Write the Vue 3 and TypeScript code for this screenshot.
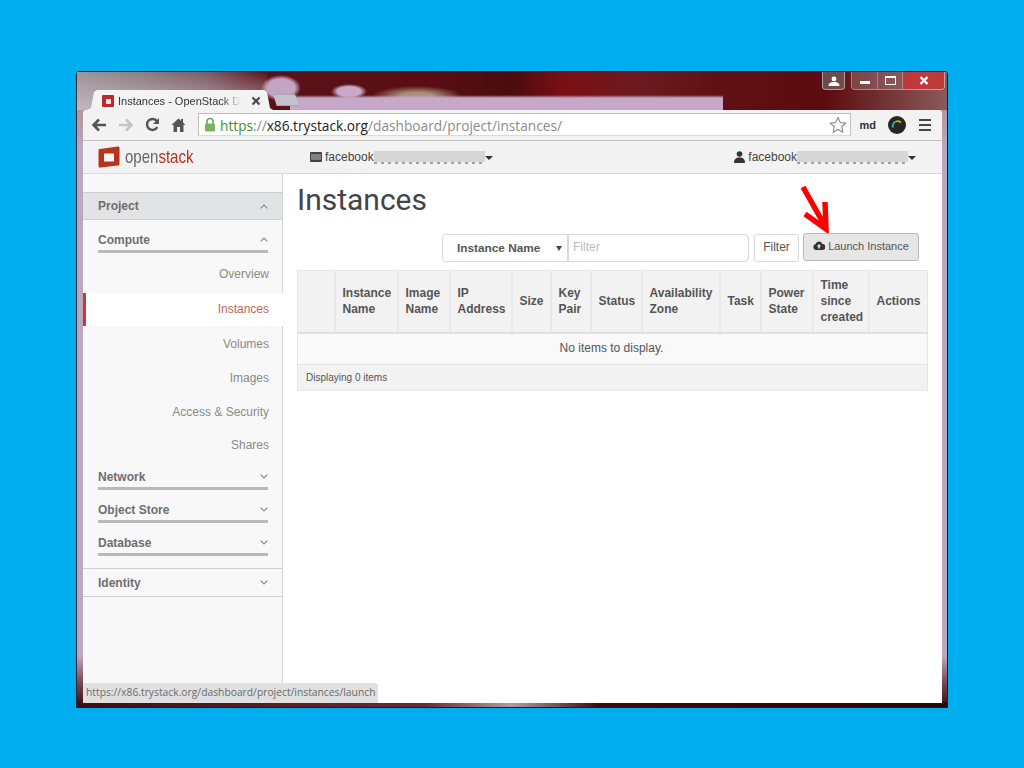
<script setup lang="ts">
const computeItems = [
  { label: 'Overview', active: false },
  { label: 'Instances', active: true },
  { label: 'Volumes', active: false },
  { label: 'Images', active: false },
  { label: 'Access & Security', active: false },
  { label: 'Shares', active: false },
]

const groups = ['Network', 'Object Store', 'Database']

const columns = [
  { lines: [], width: 37 },
  { lines: ['Instance', 'Name'], width: 63 },
  { lines: ['Image', 'Name'], width: 52 },
  { lines: ['IP', 'Address'], width: 62 },
  { lines: ['Size'], width: 39 },
  { lines: ['Key', 'Pair'], width: 40 },
  { lines: ['Status'], width: 51 },
  { lines: ['Availability', 'Zone'], width: 78 },
  { lines: ['Task'], width: 41 },
  { lines: ['Power', 'State'], width: 52 },
  { lines: ['Time', 'since', 'created'], width: 56 },
  { lines: ['Actions'], width: 59 },
]
</script>

<template>
  <div class="desktop">
    <div class="window">
      <div class="titlebar">
        <div class="tab">
          <span class="favicon"><i /></span>
          <span class="tab-title">Instances - OpenStack Da</span>
          <svg class="tab-close" width="10" height="10" viewBox="0 0 10 10">
            <path d="M1.5 1.5l7 7M8.5 1.5l-7 7" stroke="#444" stroke-width="2" />
          </svg>
        </div>
        <div class="new-tab" />
        <div class="controls">
          <div class="ctl ctl-user">
            <svg width="12" height="10" viewBox="0 0 12 10">
              <circle cx="6" cy="3" r="2.4" fill="#fff" />
              <path d="M0.5 10c0-3 2-4 5.500-4s5.500 1 5.500 4z" fill="#fff" />
            </svg>
          </div>
          <div class="ctl-group">
            <div class="ctl ctl-min"><i /></div>
            <div class="ctl ctl-max"><i /></div>
            <div class="ctl ctl-close">
              <svg width="10" height="9" viewBox="0 0 10 9">
                <path d="M1.500 1l7 7M8.500 1l-7 7" stroke="#fff" stroke-width="2.400" />
              </svg>
            </div>
          </div>
        </div>
      </div>

      <div class="toolbar">
        <svg class="nav" width="16" height="14" viewBox="0 0 16 14">
          <path d="M15 7H4M8 1.500L2.500 7 8 12.500" fill="none" stroke="#555" stroke-width="2.600" />
        </svg>
        <svg class="nav" width="16" height="14" viewBox="0 0 16 14">
          <path d="M1 7h11M8 1.500L13.500 7 8 12.500" fill="none" stroke="#c4c4c4" stroke-width="2.600" />
        </svg>
        <svg class="nav" width="15" height="15" viewBox="0 0 15 15">
          <path d="M12.300 10.200A5.500 5.500 0 1 1 12 4.200" fill="none" stroke="#555" stroke-width="2.400" />
          <path d="M14 1v6H8z" fill="#555" />
        </svg>
        <svg class="nav nav-home" width="15" height="14" viewBox="0 0 15 14">
          <path d="M7.500 0.500L0.500 7h2v7h3.500V9h3v5h3.500V7h2L12 4.600V1h-2v1.700z" fill="#555" />
        </svg>
        <div class="omnibox">
          <svg class="lock" width="12" height="15" viewBox="0 0 12 15">
            <path d="M3 7V4.500a3 3 0 0 1 6 0V7" fill="none" stroke="#6aa84f" stroke-width="1.600" />
            <rect x="1" y="6.500" width="10" height="8" rx="1" fill="#7ab55c" />
          </svg>
          <span class="url"><b>https</b><em>://</em><strong>x86.trystack.org</strong><em>/dashboard/project/instances/</em></span>
          <svg class="star" width="18" height="18" viewBox="0 0 18 18">
            <path d="M9 1.500l2.300 5 5.400.6-4 3.700 1.100 5.400L9 13.500l-4.800 2.700 1.100-5.400-4-3.700 5.400-.6z" fill="#fff" stroke="#8a8a8a" stroke-width="1.100" />
          </svg>
        </div>
        <span class="md">md</span>
        <svg class="ext" width="18" height="18" viewBox="0 0 18 18">
          <circle cx="9" cy="9" r="9" fill="#27261f" />
          <path d="M5 11.500a4.500 4.500 0 0 1 3-6" fill="none" stroke="#2bb3c0" stroke-width="1.800" />
          <path d="M8 5.500a4.500 4.500 0 0 1 5 1" fill="none" stroke="#e0b020" stroke-width="1.800" />
        </svg>
        <div class="hamburger"><i /><i /><i /></div>
      </div>

      <header class="topbar">
        <div class="logo">
          <svg width="22" height="22" viewBox="0 0 22 22">
            <path d="M2 3l18-2.500c1 0 1.500.5 1.500 1.500v16c0 1-.5 1.500-1.500 1.500L2 21.500c-1 0-1.500-.5-1.500-1.500V4.500C.5 3.500 1 3 2 3z" fill="#b9321f" />
            <rect x="6" y="7.500" width="10" height="8" fill="#f5f5f5" />
          </svg>
          <span class="logo-text">open<span>stack</span></span>
        </div>
        <div class="project-pick">
          <svg width="12" height="10" viewBox="0 0 12 10">
            <rect width="12" height="10" rx="1" fill="#444" />
            <path d="M1 3h10M1 5h10M1 7h10" stroke="#ddd" stroke-width="0.800" />
          </svg>
          <span class="who">facebook</span><span class="redact" /><span class="caret" />
        </div>
        <div class="user-pick">
          <svg width="11" height="12" viewBox="0 0 11 12">
            <circle cx="5.500" cy="3" r="2.800" fill="#333" />
            <path d="M0 12c0-4 2-5.500 5.500-5.500S11 8 11 12z" fill="#333" />
          </svg>
          <span class="who">facebook</span><span class="redact" /><span class="caret" />
        </div>
      </header>

      <div class="page">
        <aside class="sidebar">
          <div class="side-head">
            <span>Project</span>
            <svg class="chev" width="8" height="5" viewBox="0 0 8 5"><path d="M.7 4.300L4 1l3.300 3.300" fill="none" stroke="#888" stroke-width="1.200" /></svg>
          </div>
          <div class="group">
            <span>Compute</span>
            <svg class="chev" width="8" height="5" viewBox="0 0 8 5"><path d="M.7 4.300L4 1l3.300 3.300" fill="none" stroke="#888" stroke-width="1.200" /></svg>
          </div>
          <ul class="side-list">
            <li v-for="item in computeItems" :key="item.label" :class="{ active: item.active }">{{ item.label }}</li>
          </ul>
          <div v-for="g in groups" :key="g" class="group">
            <span>{{ g }}</span>
            <svg class="chev" width="8" height="5" viewBox="0 0 8 5"><path d="M.7.700L4 4l3.300-3.300" fill="none" stroke="#888" stroke-width="1.200" /></svg>
          </div>
          <div class="identity">
            <span>Identity</span>
            <svg class="chev" width="8" height="5" viewBox="0 0 8 5"><path d="M.7.700L4 4l3.300-3.300" fill="none" stroke="#888" stroke-width="1.200" /></svg>
          </div>
        </aside>

        <main class="content">
          <h1>Instances</h1>
          <div class="actions">
            <div class="select">
              <span>Instance Name</span>
              <i class="select-caret" />
            </div>
            <div class="input">Filter</div>
            <button class="btn btn-filter">Filter</button>
            <button class="btn launch">
              <svg width="12" height="9" viewBox="0 0 12 9">
                <path d="M3 9a3 3 0 0 1-.4-5.900A3.500 3.500 0 0 1 9.300 3 3 3 0 0 1 9.500 9z" fill="#333" />
                <path d="M6 3L3.800 5.500h1.400V7.500h1.600V5.500h1.400z" fill="#e6e6e6" />
              </svg>
              Launch Instance
            </button>
            <svg class="arrow" width="32" height="48" viewBox="0 0 32 48">
              <path d="M4 2L26 41M26 17L27 44L6 29" fill="none" stroke="#f00" stroke-width="5.500" />
            </svg>
          </div>
          <table class="grid">
            <colgroup>
              <col v-for="(c, i) in columns" :key="i" :style="{ width: c.width + 'px' }" />
            </colgroup>
            <thead>
              <tr>
                <th v-for="(c, i) in columns" :key="i">
                  <div v-for="line in c.lines" :key="line">{{ line }}</div>
                </th>
              </tr>
            </thead>
            <tbody>
              <tr><td class="empty" colspan="12">No items to display.</td></tr>
            </tbody>
            <tfoot>
              <tr><td class="foot" colspan="12">Displaying 0 items</td></tr>
            </tfoot>
          </table>
        </main>
        <div class="status-bubble">https://x86.trystack.org/dashboard/project/instances/launch</div>
      </div>
    </div>
  </div>
</template>

<style>
html, body {
  margin: 0;
  background: #00aeef;
}
</style>

<style scoped>
.desktop {
  width: 1024px;
  height: 768px;
  box-sizing: border-box;
  padding: 71px 76px 60px;
  background: #00aeef;
  font-family: "Liberation Sans", Arial, sans-serif;
  overflow: hidden;
}

.window {
  height: 637px;
  box-sizing: border-box;
  border: 1px solid #14202e;
  border-radius: 3px 3px 0 0;
  padding: 0 5px 4px 6px;
  display: flex;
  flex-direction: column;
  background:
    linear-gradient(90deg, #3a1016 0, #6b2a34 40%, #b29aa0 50%, #3a0a10 60%, #2a0508 100%) 0 100% / 100% 5px no-repeat,
    linear-gradient(180deg, #a88484 0, #bba7c0 12%, #bba7c0 92%, #7a4a5a 96%, #3a0a10 100%);
}

.titlebar {
  flex: 0 0 38px;
  margin: 0 -5px 0 -6px;
  padding: 0 2px 0 6px;
  display: flex;
  align-items: flex-end;
  background:
    linear-gradient(180deg, transparent 0, #c6a8c9 3px) 213px 23px / 433px 15px no-repeat,
    radial-gradient(closest-side, #c4a4c4 70%, transparent) 184px 3px / 40px 26px no-repeat,
    radial-gradient(closest-side, #c9a8c8 65%, transparent) 254px 12px / 36px 15px no-repeat,
    radial-gradient(closest-side, #a8907c 35%, transparent) 295px 14px / 90px 20px no-repeat,
    linear-gradient(180deg, transparent 0, rgba(205, 195, 205, 0.75) 100%) 0 0 / 190px 100% no-repeat,
    linear-gradient(90deg, #a09498 0, #8c7c80 8%, #7d5a64 15%, #5a1118 22%, #5a0e14 40%, #4a0c10 50%, #7c1014 56%, #6a1a20 65%, #5e1014 74%, #5c0c10 86%, #8a5a5a 100%);
}

.tab {
  width: 190px;
  height: 20px;
  box-sizing: border-box;
  padding: 2px 12px 0 19px;
  display: flex;
  align-items: center;
  flex: none;
  background: #f3f3f3;
  clip-path: polygon(0 100%, 4px 100%, 8px 90%, 11px 10%, 14px 0, 181px 0, 184px 10%, 187px 90%, 100% 100%);
  font-size: 11px;
  color: #333;
}

.favicon {
  width: 12px;
  height: 12px;
  flex: none;
  margin-right: 4px;
  background: #b92a2a;
  border-radius: 1px;
  display: flex;
  align-items: center;
  justify-content: center;
}

.favicon i {
  width: 5px;
  height: 5px;
  background: #f1dede;
}

.tab-title {
  flex: none;
  width: 127px;
  white-space: nowrap;
  -webkit-mask-image: linear-gradient(90deg, #000 82%, transparent 97%);
  mask-image: linear-gradient(90deg, #000 82%, transparent 97%);
}

.tab-close {
  flex: none;
  margin-left: 6px;
}

.new-tab {
  width: 27px;
  height: 12px;
  margin: 0 0 4px 0;
  background: #c3c2cc;
  border: 1px solid #a9a4b0;
  box-sizing: border-box;
  clip-path: polygon(0 0, 80% 0, 100% 100%, 14% 100%);
}

.controls {
  margin-left: auto;
  align-self: flex-start;
  display: flex;
  gap: 6px;
}

.ctl-group {
  display: flex;
  border: 1px solid rgba(255, 255, 255, 0.45);
  border-top: 0;
  border-radius: 0 0 4px 4px;
  overflow: hidden;
}

.ctl {
  height: 17px;
  box-sizing: border-box;
  display: flex;
  align-items: center;
  justify-content: center;
  background: rgba(170, 140, 140, 0.35);
}

.ctl-user {
  width: 23px;
  height: 18px;
  border: 1px solid rgba(255, 255, 255, 0.45);
  border-top: 0;
  border-radius: 0 0 4px 4px;
  background: rgba(120, 100, 100, 0.7);
}

.ctl-min {
  width: 26px;
  border-right: 1px solid rgba(255, 255, 255, 0.3);
}

.ctl-min i {
  width: 10px;
  height: 3px;
  margin-top: 4px;
  background: #fff;
}

.ctl-max {
  width: 25px;
  border-right: 1px solid rgba(255, 255, 255, 0.3);
}

.ctl-max i {
  width: 9px;
  height: 6px;
  border: 1px solid #fff;
  border-top-width: 2px;
}

.ctl-close {
  width: 41px;
  background: #c0393a;
}

.toolbar {
  flex: 0 0 31px;
  display: flex;
  align-items: center;
  padding: 0 11px 1px 8px;
  background: #f2f2f2;
  border-radius: 3px 3px 0 0;
  box-sizing: border-box;
  border-bottom: 1px solid #c4c4c4;
}

.nav {
  flex: none;
  margin-right: 11px;
}

.nav-home {
  margin-right: 12px;
}

.omnibox {
  flex: 1;
  height: 23px;
  box-sizing: border-box;
  border: 1px solid #c0c0c0;
  border-bottom-color: #dadada;
  background: #fff;
  display: flex;
  align-items: center;
  padding: 0 3px 0 5px;
  margin-right: 9px;
}

.lock {
  flex: none;
  margin-right: 4px;
}

.url {
  flex: 1;
  padding-top: 1px;
  font-family: "Open Sans", sans-serif;
  font-size: 13.700px;
  white-space: nowrap;
  color: #8b8b8b;
}

.url b {
  font-weight: 400;
  color: #3f8f2c;
}

.url em {
  font-style: normal;
}

.url strong {
  font-weight: 400;
  color: #222;
}

.md {
  font-size: 11px;
  font-weight: 700;
  color: #333;
  margin-right: 12px;
}

.ext {
  flex: none;
  margin-right: 13px;
}

.hamburger {
  display: flex;
  flex-direction: column;
  gap: 3px;
}

.hamburger i {
  width: 12px;
  height: 2px;
  background: #444;
}

.topbar {
  flex: 0 0 33px;
  box-sizing: border-box;
  display: flex;
  align-items: center;
  background: #f2f2f2;
  border-bottom: 1px solid #d8d8d8;
  padding-left: 15px;
  font-size: 12px;
  color: #444;
}

.logo {
  width: 212px;
  display: flex;
  align-items: center;
  gap: 5px;
  flex: none;
}

.logo-text {
  display: inline-block;
  font-size: 19px;
  color: #666;
  transform: scaleX(0.79);
  transform-origin: left center;
  white-space: nowrap;
}

.logo-text span {
  color: #b9321f;
}

.project-pick,
.user-pick {
  display: flex;
  align-items: center;
}

.user-pick {
  margin-left: auto;
  margin-right: 26px;
}

.who {
  margin-left: 3px;
}

.redact {
  width: 111px;
  height: 13px;
  background:
    repeating-linear-gradient(90deg, #a0a0a0 0 3px, transparent 3px 7px) 0 100% / 100% 2px no-repeat,
    linear-gradient(#d6d6d6, #d6d6d6) 0 0 / 100% 11px no-repeat;
}

.caret {
  margin-top: 1px;
  border-left: 4px solid transparent;
  border-right: 4px solid transparent;
  border-top: 4px solid #333;
}

.page {
  flex: 1;
  min-height: 0;
  display: flex;
  position: relative;
  background: #fff;
}

.sidebar {
  width: 200px;
  flex: none;
  box-sizing: border-box;
  padding-top: 18px;
  background: #f8f8f8;
  border-right: 1px solid #d4d4d4;
  font-size: 12px;
}

.side-head {
  height: 28px;
  box-sizing: border-box;
  padding: 0 14px 0 15px;
  display: flex;
  align-items: center;
  justify-content: space-between;
  background: #e2e3e4;
  border-top: 1px solid #cfcfcf;
  border-bottom: 1px solid #cfcfcf;
  font-weight: 700;
  color: #6d6e71;
}

.group {
  height: 33px;
  box-sizing: border-box;
  margin: 0 14px 0 15px;
  padding-top: 9px;
  display: flex;
  align-items: center;
  justify-content: space-between;
  border-bottom: 3px solid #b9b9b9;
  font-weight: 700;
  color: #6d6e71;
}

.side-list {
  list-style: none;
  margin: 4px 0 0;
  padding: 0;
}

.side-list li {
  height: 34px;
  line-height: 34px;
  text-align: right;
  padding-right: 13px;
  color: #8a8a8a;
}

.side-list li:first-child {
  height: 36px;
}

.side-list li.active {
  height: 33px;
  line-height: 33px;
  margin-bottom: 1px;
  margin-right: -1px;
  padding-right: 14px;
  background: #fff;
  border-left: 3px solid #c8382e;
  color: #c0655a;
}

.side-list li:last-child {
  height: 28px;
  line-height: 32px;
}

.identity {
  height: 29px;
  margin-top: 12px;
  box-sizing: border-box;
  padding: 0 14px 0 15px;
  display: flex;
  align-items: center;
  justify-content: space-between;
  border-top: 1px solid #cfcfcf;
  border-bottom: 1px solid #cfcfcf;
  font-weight: 700;
  color: #6d6e71;
}

.content {
  flex: 1;
  min-width: 0;
  padding: 0 14px;
}

h1 {
  margin: 9px 0 0;
  height: 34px;
  font-family: Roboto, sans-serif;
  font-size: 30px;
  line-height: 34px;
  font-weight: 400;
  color: #444;
}

.actions {
  position: relative;
  height: 37px;
  margin-top: 16px;
  display: flex;
  align-items: flex-start;
  justify-content: flex-end;
  padding-right: 9px;
  font-size: 12px;
  color: #555;
}

.select {
  width: 126px;
  height: 28px;
  margin-top: 1px;
  box-sizing: border-box;
  border: 1px solid #d8d8d8;
  border-radius: 4px 0 0 4px;
  padding-left: 14px;
  display: flex;
  align-items: center;
  font-size: 11.800px;
  font-weight: 700;
  color: #555;
  position: relative;
}

.select-caret {
  position: absolute;
  right: 5px;
  top: 11px;
  border-left: 3px solid transparent;
  border-right: 3px solid transparent;
  border-top: 5px solid #444;
}

.input {
  width: 181px;
  height: 28px;
  margin-top: 1px;
  box-sizing: border-box;
  border: 1px solid #d8d8d8;
  border-radius: 0 4px 4px 0;
  padding: 0 0 2px 4px;
  display: flex;
  align-items: center;
  color: #bbb;
}

.btn {
  height: 28px;
  box-sizing: border-box;
  margin: 0 0 0 4px;
  padding: 0;
  border: 1px solid #d8d8d8;
  border-radius: 3px;
  background: #fff;
  font: inherit;
  color: #555;
}

.btn-filter {
  width: 45px;
  margin-left: 5px;
  margin-top: 1px;
  padding-bottom: 2px;
}

.launch {
  width: 116px;
  padding-bottom: 3px;
  background: #e6e6e6;
  border-color: #b9b9b9;
  display: flex;
  align-items: center;
  justify-content: center;
  gap: 3px;
  font-size: 11px;
}

.arrow {
  position: absolute;
  right: 97px;
  top: -48px;
}

.grid {
  width: 630px;
  table-layout: fixed;
  border-collapse: collapse;
  font-size: 12px;
  color: #555;
  border: 1px solid #e6e6e6;
}

th {
  height: 62px;
  padding: 0 0 0 7px;
  box-sizing: border-box;
  text-align: left;
  font-weight: 700;
  line-height: 16px;
  background: #f2f2f2;
  border-left: 2px solid #e9e9e9;
  border-bottom: 2px solid #e0e0e0;
  color: #555;
}

th:first-child {
  border-left: 0;
}

.empty {
  height: 32px;
  padding: 0 2px 1px 0;
  box-sizing: border-box;
  text-align: center;
  background: #f9f9f9;
  border-bottom: 1px solid #e4e4e4;
}

.foot {
  height: 26px;
  padding: 0 0 0 8px;
  box-sizing: border-box;
  background: #f2f2f2;
  font-size: 10px;
  color: #555;
}

.status-bubble {
  position: absolute;
  left: 0;
  bottom: 0;
  height: 20px;
  line-height: 18px;
  box-sizing: border-box;
  padding: 0 3px;
  background: #e0e0e0;
  border-radius: 0 3px 0 0;
  font-family: "Open Sans", sans-serif;
  font-size: 10.300px;
  color: #6a6a6a;
  white-space: nowrap;
}
</style>
